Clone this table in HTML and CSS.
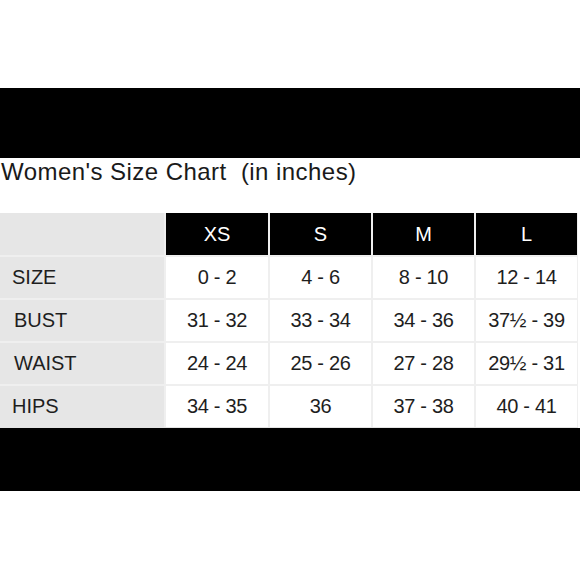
FILE: index.html
```html
<!DOCTYPE html>
<html>
<head>
<meta charset="utf-8">
<link rel="stylesheet" href="styles.css">
</head>
<body>
<div class="spacer"></div>
<div class="bar bar-top"></div>
<div class="title">Women's Size Chart&nbsp; (in inches)</div>
<div class="chart">
  <div class="label"></div>
  <div class="head">XS</div>
  <div class="head">S</div>
  <div class="head">M</div>
  <div class="head">L</div>

  <div class="label">SIZE</div>
  <div class="cell">0 - 2</div>
  <div class="cell">4 - 6</div>
  <div class="cell">8 - 10</div>
  <div class="cell">12 - 14</div>

  <div class="label label-in">BUST</div>
  <div class="cell">31 - 32</div>
  <div class="cell">33 - 34</div>
  <div class="cell">34 - 36</div>
  <div class="cell">37½ - 39</div>

  <div class="label label-in">WAIST</div>
  <div class="cell">24 - 24</div>
  <div class="cell">25 - 26</div>
  <div class="cell">27 - 28</div>
  <div class="cell">29½ - 31</div>

  <div class="label">HIPS</div>
  <div class="cell">34 - 35</div>
  <div class="cell">36</div>
  <div class="cell">37 - 38</div>
  <div class="cell">40 - 41</div>
</div>
<div class="bar bar-bottom"></div>
</body>
</html>
```

FILE: styles.css
```css
html, body {
  margin: 0;
  padding: 0;
  background: #ffffff;
  font-family: "Liberation Sans", Arial, sans-serif;
  color: #1e1e1e;
}

.spacer {
  height: 88px;
}

.bar {
  background: #000000;
}

.bar-top {
  height: 70px;
}

.bar-bottom {
  height: 63px;
}

.title {
  height: 55px;
  line-height: 28px;
  font-size: 24px;
  letter-spacing: 0.45px;
  padding-left: 1px;
  color: #1a1a1a;
}

.chart {
  display: grid;
  grid-template-columns: 164px 102px 101px 101px 101px;
  grid-template-rows: 42px 41px 41px 41px 41px;
  column-gap: 2px;
  row-gap: 2px;
  width: 577px;
  padding-right: 1px;
  background: #efefef;
  border-bottom: 1px solid #e4e4e4;
}

.label {
  background: #e6e6e6;
  display: flex;
  align-items: center;
  padding-left: 12px;
  font-size: 20px;
  color: #1e1e1e;
}

.label-in {
  padding-left: 14px;
}

.head {
  background: #000000;
  color: #ffffff;
  display: flex;
  align-items: center;
  justify-content: center;
  font-size: 20px;
}

.cell {
  background: #ffffff;
  display: flex;
  align-items: center;
  justify-content: center;
  font-size: 20px;
  letter-spacing: -0.3px;
  color: #1e1e1e;
}
```
